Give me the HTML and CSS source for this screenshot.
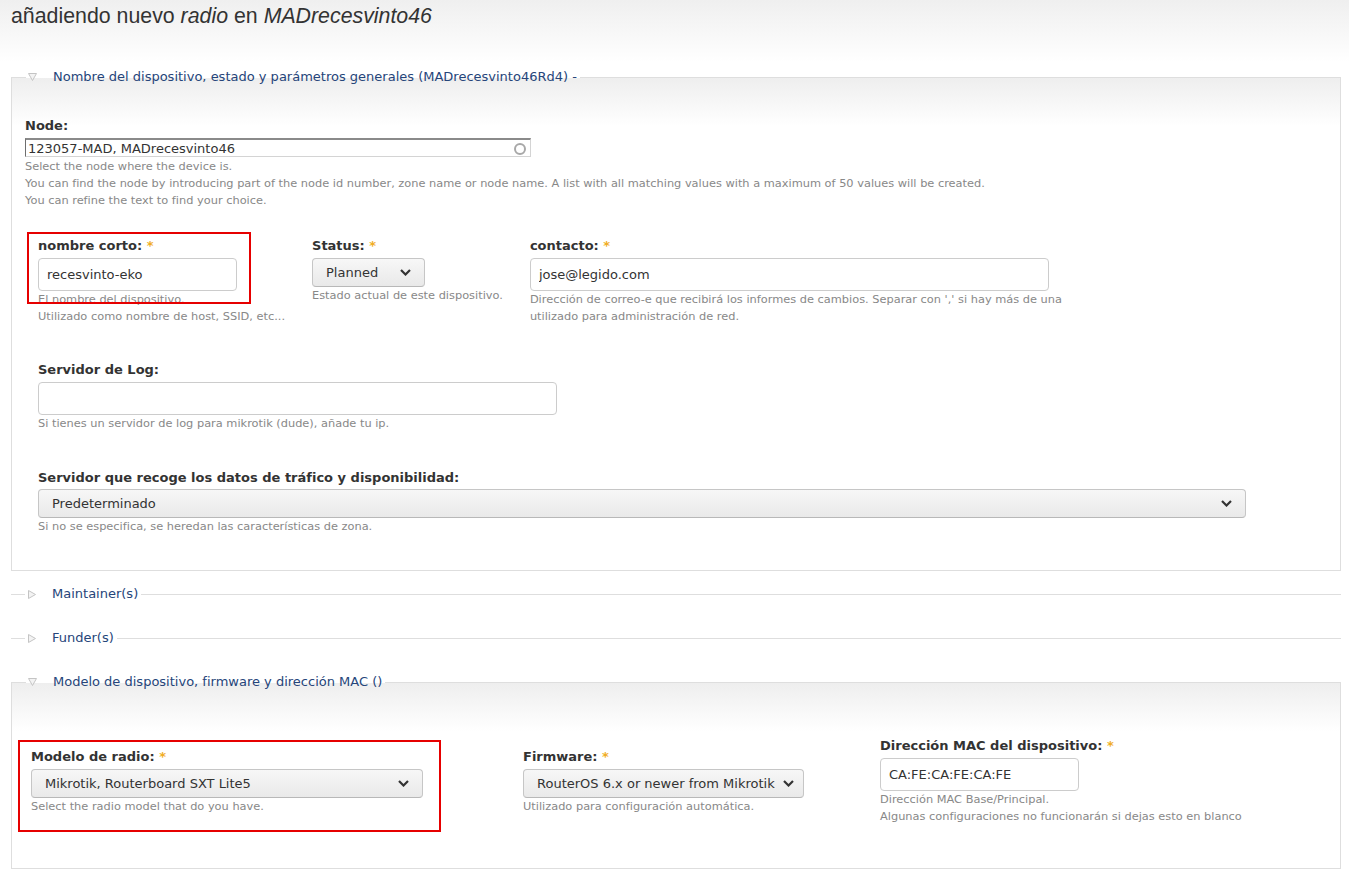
FILE: index.html
```html
<!DOCTYPE html>
<html lang="es">
<head>
    <meta charset="UTF-8">
    <title>añadiendo nuevo radio</title>
    <link rel="stylesheet" href="styles.css">
</head>
<body>
    <h1 class="page-title">añadiendo nuevo <em>radio</em> en <em>MADrecesvinto46</em></h1>

    <fieldset class="group group-general">
        <legend><span class="arrow"><svg width="9" height="8" viewBox="0 0 9 8"><polygon points="0.5,0.5 8.5,0.5 4.5,7.5" fill="#f3f3f3" stroke="#c4c4c4"/></svg></span>Nombre del dispositivo, estado y parámetros generales (MADrecesvinto46Rd4) -</legend>
        <div class="group-body">
            <div class="form-item node-item">
                <label>Node:</label>
                <div class="autocomplete">
                    <input type="text" value="123057-MAD, MADrecesvinto46">
                    <svg width="14" height="14" viewBox="0 0 14 14"><circle cx="7" cy="7" r="5" fill="none" stroke="#a8a8a8" stroke-width="2"/></svg>
                </div>
                <div class="description">
                    <div>Select the node where the device is.</div>
                    <div>You can find the node by introducing part of the node id number, zone name or node name. A list with all matching values with a maximum of 50 values will be created.</div>
                    <div>You can refine the text to find your choice.</div>
                </div>
            </div>

            <div class="columns row-main">
                <div class="form-item">
                    <span class="mark mark-name"></span>
                    <label>nombre corto: <span class="req">*</span></label>
                    <input type="text" class="text-input w-short" value="recesvinto-eko">
                    <div class="description">
                        <div>El nombre del dispositivo.</div>
                        <div>Utilizado como nombre de host, SSID, etc...</div>
                    </div>
                </div>
                <div class="form-item">
                    <label>Status: <span class="req">*</span></label>
                    <div class="select w-status"><span>Planned</span><svg width="11" height="7" viewBox="0 0 11 7"><polyline points="1,1 5.5,5.5 10,1" fill="none" stroke="#333" stroke-width="2.2"/></svg></div>
                    <div class="description">
                        <div>Estado actual de este dispositivo.</div>
                    </div>
                </div>
                <div class="form-item">
                    <label>contacto: <span class="req">*</span></label>
                    <input type="text" class="text-input w-long" value="jose@legido.com">
                    <div class="description">
                        <div>Dirección de correo-e que recibirá los informes de cambios. Separar con ',' si hay más de una</div>
                        <div>utilizado para administración de red.</div>
                    </div>
                </div>
            </div>

            <div class="form-item indent item-log">
                <label>Servidor de Log:</label>
                <input type="text" class="text-input w-long" value="">
                <div class="description">
                    <div>Si tienes un servidor de log para mikrotik (dude), añade tu ip.</div>
                </div>
            </div>

            <div class="form-item indent item-graph">
                <label>Servidor que recoge los datos de tráfico y disponibilidad:</label>
                <div class="select w-full"><span>Predeterminado</span><svg width="11" height="7" viewBox="0 0 11 7"><polyline points="1,1 5.5,5.5 10,1" fill="none" stroke="#333" stroke-width="2.2"/></svg></div>
                <div class="description">
                    <div>Si no se especifica, se heredan las características de zona.</div>
                </div>
            </div>
        </div>
    </fieldset>

    <fieldset class="group collapsed">
        <legend><span class="arrow"><svg width="8" height="9" viewBox="0 0 8 9"><polygon points="0.5,0.5 7.5,4.5 0.5,8.5" fill="#f3f3f3" stroke="#c4c4c4"/></svg></span>Maintainer(s)</legend>
    </fieldset>

    <fieldset class="group collapsed">
        <legend><span class="arrow"><svg width="8" height="9" viewBox="0 0 8 9"><polygon points="0.5,0.5 7.5,4.5 0.5,8.5" fill="#f3f3f3" stroke="#c4c4c4"/></svg></span>Funder(s)</legend>
    </fieldset>

    <fieldset class="group group-model">
        <legend><span class="arrow"><svg width="9" height="8" viewBox="0 0 9 8"><polygon points="0.5,0.5 8.5,0.5 4.5,7.5" fill="#f3f3f3" stroke="#c4c4c4"/></svg></span>Modelo de dispositivo, firmware y dirección MAC ()</legend>
        <div class="group-body">
            <div class="columns row-model">
                <div class="form-item col-radio">
                    <span class="mark mark-model"></span>
                    <label>Modelo de radio: <span class="req">*</span></label>
                    <div class="select w-model"><span>Mikrotik, Routerboard SXT Lite5</span><svg width="11" height="7" viewBox="0 0 11 7"><polyline points="1,1 5.5,5.5 10,1" fill="none" stroke="#333" stroke-width="2.2"/></svg></div>
                    <div class="description">
                        <div>Select the radio model that do you have.</div>
                    </div>
                </div>
                <div class="form-item col-firmware">
                    <label>Firmware: <span class="req">*</span></label>
                    <div class="select w-firmware"><span>RouterOS 6.x or newer from Mikrotik</span><svg width="11" height="7" viewBox="0 0 11 7"><polyline points="1,1 5.5,5.5 10,1" fill="none" stroke="#333" stroke-width="2.2"/></svg></div>
                    <div class="description">
                        <div>Utilizado para configuración automática.</div>
                    </div>
                </div>
                <div class="form-item col-mac">
                    <label>Dirección MAC del dispositivo: <span class="req">*</span></label>
                    <input type="text" class="text-input w-short" value="CA:FE:CA:FE:CA:FE">
                    <div class="description">
                        <div>Dirección MAC Base/Principal.</div>
                        <div>Algunas configuraciones no funcionarán si dejas esto en blanco</div>
                    </div>
                </div>
            </div>
        </div>
    </fieldset>
</body>
</html>
```

FILE: styles.css
```css
body {
    margin: 0;
    font-family: 'DejaVu Sans', sans-serif;
    font-size: 13px;
    color: #333;
    background: #fff linear-gradient(#efefef, #fff 62px) no-repeat;
}
.page-title {
    margin: 0 0 38px;
    padding: 2px 11px 0;
    font-family: 'Liberation Sans', Arial, sans-serif;
    font-size: 21.33px;
    font-weight: normal;
    line-height: 28px;
    color: #333;
}
.group {
    margin: 0 8px 14px 11px;
    padding: 0;
    border: 1px solid #dedede;
    background: linear-gradient(#eeeeee, #fff 48px);
    min-inline-size: 0;
}
.group legend {
    margin-left: 14px;
    padding: 0 3px 0 2px;
    line-height: 18px;
    font-size: 13px;
    color: #26457a;
}
.arrow {
    display: inline-block;
    width: 25px;
    vertical-align: top;
}
.arrow svg {
    display: block;
    margin-top: 5px;
}
.collapsed {
    border-width: 1px 0 0;
    background: none;
    margin-bottom: 26px;
}
.collapsed .arrow svg {
    margin-top: 5px;
    margin-left: 1px;
}
.group-general .group-body {
    padding: 31px 13px 35px;
}
.group-model .group-body {
    padding: 46px 19px 43px;
}
.form-item {
    position: relative;
}
.form-item label {
    display: block;
    font-weight: bold;
    line-height: 17px;
    margin-bottom: 4px;
}
.req {
    color: #f0ad24;
}
.description {
    font-size: 11.375px;
    line-height: 17px;
    color: #888;
}
.node-item .description {
    margin-top: 1px;
}
.autocomplete {
    display: flex;
    align-items: center;
    width: 506px;
    height: 19px;
    box-sizing: border-box;
    border: 1px solid #d4d4d4;
    border-top: 2px solid #8a8a8a;
    border-left-color: #6e6e6e;
    background: #fff;
}
.autocomplete input {
    flex: 1;
    border: none;
    padding: 0 2px;
    margin: 0;
    font-family: 'DejaVu Sans', sans-serif;
    font-size: 13px;
    color: #333;
    outline: none;
    background: transparent;
}
.autocomplete svg {
    margin-right: 3px;
    margin-top: 2px;
}
.indent {
    margin-left: 13px;
}
.columns {
    display: flex;
    align-items: flex-start;
}
.row-main {
    margin: 28px 0 0 13px;
    gap: 27px;
}
.item-log {
    margin-top: 36px;
}
.item-graph {
    margin-top: 37px;
}
.item-graph label {
    margin-bottom: 3px;
}
.text-input {
    display: block;
    height: 33px;
    box-sizing: border-box;
    margin: 0;
    padding: 0 8px;
    border: 1px solid #cccccc;
    border-radius: 4px;
    font-family: 'DejaVu Sans', sans-serif;
    font-size: 13px;
    color: #333;
    background: #fff;
}
.w-short {
    width: 199px;
}
.w-long {
    width: 519px;
}
.select {
    display: flex;
    align-items: center;
    justify-content: space-between;
    gap: 8px;
    height: 29px;
    box-sizing: border-box;
    padding: 0 13px 0 13px;
    border: 1px solid #c6c6c6;
    border-bottom-color: #b8b8b8;
    border-radius: 4px;
    background: linear-gradient(#f7f7f7, #e9e9e9);
    color: #333;
    white-space: nowrap;
}
.select svg {
    flex: none;
}
.w-status {
    width: 113px;
}
.w-full {
    width: 1208px;
}
.w-model {
    width: 392px;
}
.w-firmware {
    width: 281px;
}
.col-radio {
    width: 492px;
    margin-top: 11px;
}
.col-firmware {
    width: 357px;
    margin-top: 11px;
}
.mark {
    position: absolute;
    border: 2px solid #e60000;
    box-sizing: border-box;
    pointer-events: none;
}
.mark-name {
    left: -11px;
    top: -5px;
    width: 224px;
    height: 72px;
}
.mark-model {
    left: -13px;
    top: -8px;
    width: 423px;
    height: 92px;
}
```
